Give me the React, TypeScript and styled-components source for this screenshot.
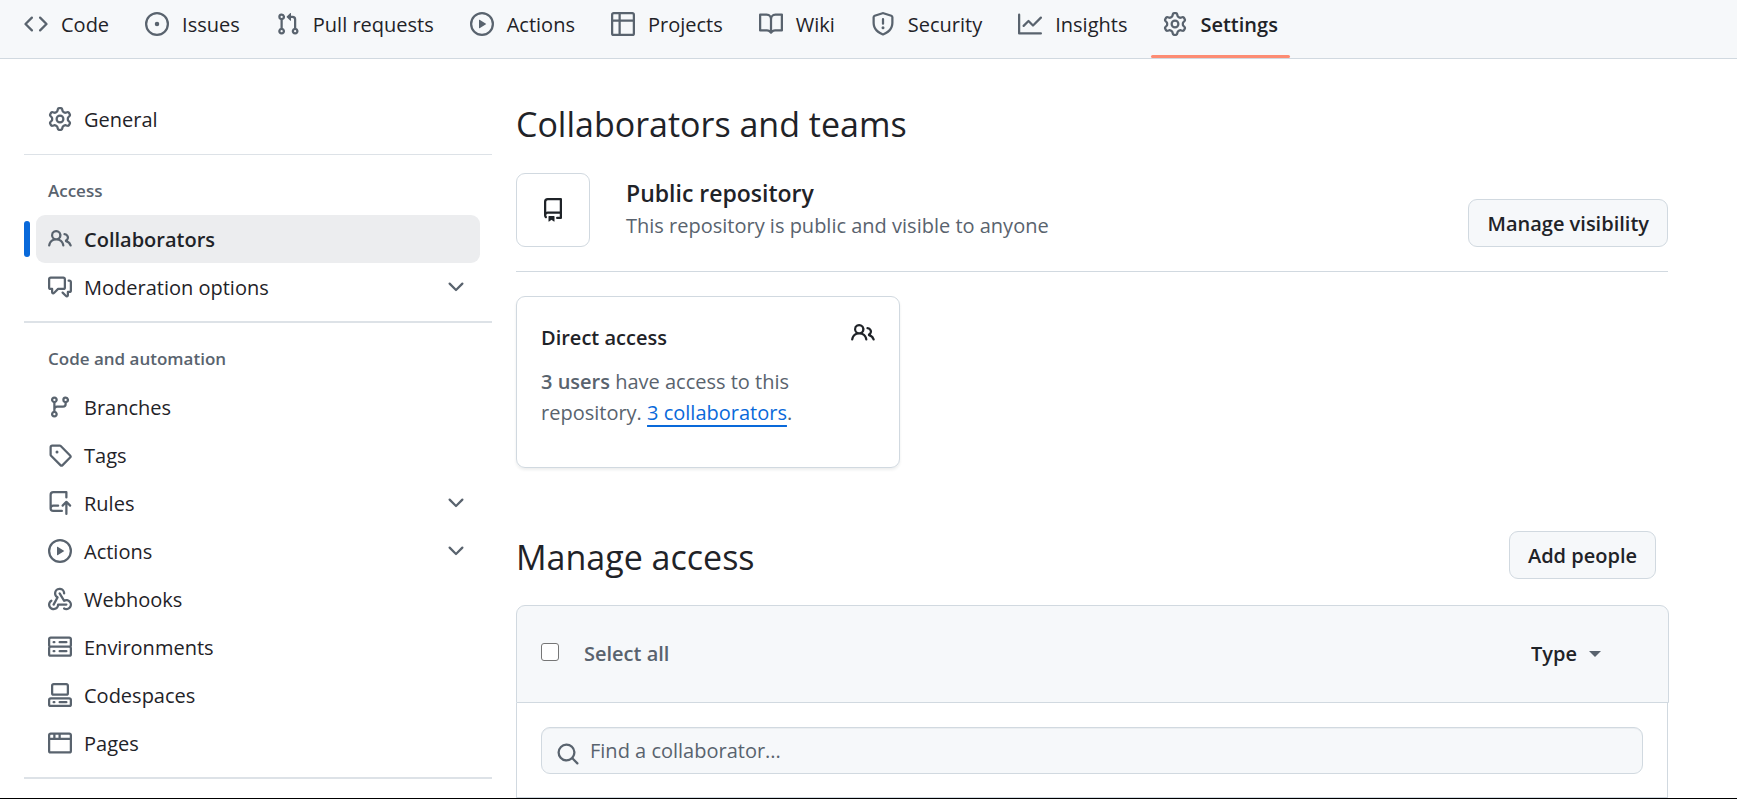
import React from "react";
import styled, { createGlobalStyle, css } from "styled-components";

const color = {
  text: "#1f2328",
  muted: "#59636e",
  border: "#d1d9e0",
  subtle: "#f6f8fa",
  link: "#0969da",
};

const icons = {
  code: ["m11.28 3.22 4.25 4.25a.75.75 0 0 1 0 1.06l-4.25 4.25a.749.749 0 0 1-1.275-.326.749.749 0 0 1 .215-.734L13.94 8l-3.72-3.72a.749.749 0 0 1 .326-1.275.749.749 0 0 1 .734.215Zm-6.56 0a.751.751 0 0 1 1.042.018.751.751 0 0 1 .018 1.042L2.06 8l3.72 3.72a.749.749 0 0 1-.326 1.275.749.749 0 0 1-.734-.215L.47 8.53a.75.75 0 0 1 0-1.06Z"],
  issue: ["M8 9.5a1.5 1.5 0 1 0 0-3 1.5 1.5 0 0 0 0 3Z", "M8 0a8 8 0 1 1 0 16A8 8 0 0 1 8 0ZM1.5 8a6.5 6.5 0 1 0 13 0 6.5 6.5 0 0 0-13 0Z"],
  pull: ["M1.5 3.25a2.25 2.25 0 1 1 3 2.122v5.256a2.251 2.251 0 1 1-1.5 0V5.372A2.25 2.25 0 0 1 1.5 3.25Zm5.677-.177L9.573.677A.25.25 0 0 1 10 .854V2.5h1A2.5 2.5 0 0 1 13.5 5v5.628a2.251 2.251 0 1 1-1.5 0V5a1 1 0 0 0-1-1h-1v1.646a.25.25 0 0 1-.427.177L7.177 3.427a.25.25 0 0 1 0-.354ZM3.75 2.5a.75.75 0 1 0 0 1.5.75.75 0 0 0 0-1.5Zm0 9.5a.75.75 0 1 0 0 1.5.75.75 0 0 0 0-1.5Zm8.25.75a.75.75 0 1 0 1.5 0 .75.75 0 0 0-1.5 0Z"],
  play: ["M8 0a8 8 0 1 1 0 16A8 8 0 0 1 8 0ZM1.5 8a6.5 6.5 0 1 0 13 0 6.5 6.5 0 0 0-13 0Zm4.879-2.773 4.264 2.559a.25.25 0 0 1 0 .428l-4.264 2.559A.25.25 0 0 1 6 10.559V5.442a.25.25 0 0 1 .379-.215Z"],
  table: ["M0 1.75C0 .784.784 0 1.75 0h12.5C15.216 0 16 .784 16 1.75v12.5A1.75 1.75 0 0 1 14.25 16H1.75A1.75 1.75 0 0 1 0 14.25ZM6.5 6.5v8h7.75a.25.25 0 0 0 .25-.25V6.5Zm8-1.5V1.75a.25.25 0 0 0-.25-.25H6.5V5Zm-13 1.5v7.75c0 .138.112.25.25.25H5v-8ZM5 5V1.5H1.75a.25.25 0 0 0-.25.25V5Z"],
  book: ["M0 1.75A.75.75 0 0 1 .75 1h4.253c1.227 0 2.317.59 3 1.501A3.743 3.743 0 0 1 11.006 1h4.245a.75.75 0 0 1 .75.75v10.5a.75.75 0 0 1-.75.75h-4.507a2.25 2.25 0 0 0-1.591.659l-.622.621a.75.75 0 0 1-1.06 0l-.622-.621A2.25 2.25 0 0 0 5.258 13H.75a.75.75 0 0 1-.75-.75Zm7.251 10.324.004-5.073-.002-2.253A2.25 2.25 0 0 0 5.003 2.5H1.5v9h3.757a3.75 3.75 0 0 1 1.994.574ZM8.755 4.75l-.004 7.322a3.752 3.752 0 0 1 1.992-.572H14.5v-9h-3.495a2.25 2.25 0 0 0-2.25 2.25Z"],
  shield: ["M7.467.133a1.748 1.748 0 0 1 1.066 0l5.25 1.68A1.75 1.75 0 0 1 15 3.48V7c0 1.566-.32 3.182-1.303 4.682-.983 1.498-2.585 2.813-5.032 3.855a1.697 1.697 0 0 1-1.33 0c-2.447-1.042-4.049-2.357-5.032-3.855C1.32 10.182 1 8.566 1 7V3.48a1.75 1.75 0 0 1 1.217-1.667Zm.61 1.429a.25.25 0 0 0-.153 0l-5.25 1.68a.25.25 0 0 0-.174.238V7c0 1.358.275 2.666 1.057 3.86.784 1.194 2.121 2.34 4.366 3.297a.196.196 0 0 0 .154 0c2.245-.956 3.582-2.104 4.366-3.298C13.225 9.666 13.5 8.36 13.5 7V3.48a.251.251 0 0 0-.174-.237l-5.25-1.68ZM8.75 4.75v3a.75.75 0 0 1-1.5 0v-3a.75.75 0 0 1 1.5 0ZM9 10.5a1 1 0 1 1-2 0 1 1 0 0 1 2 0Z"],
  graph: ["M1.5 1.75V13.5h13.75a.75.75 0 0 1 0 1.5H.75a.75.75 0 0 1-.75-.75V1.75a.75.75 0 0 1 1.5 0Zm14.28 2.53-5.25 5.25a.75.75 0 0 1-1.06 0L7 7.06 4.28 9.78a.751.751 0 0 1-1.042-.018.751.751 0 0 1-.018-1.042l3.25-3.25a.75.75 0 0 1 1.06 0L10 7.94l4.72-4.72a.751.751 0 0 1 1.042.018.751.751 0 0 1 .018 1.042Z"],
  gear: ["M8 0a8.2 8.2 0 0 1 .701.031C9.444.095 9.99.645 10.16 1.29l.288 1.107c.018.066.079.158.212.224.231.114.454.243.668.386.123.082.233.09.299.071l1.103-.303c.644-.176 1.392.021 1.82.63.27.385.506.792.704 1.218.315.675.111 1.422-.364 1.891l-.814.806c-.049.048-.098.147-.088.294.016.257.016.515 0 .772-.01.147.038.246.088.294l.814.806c.475.469.679 1.216.364 1.891a7.977 7.977 0 0 1-.704 1.217c-.428.61-1.176.807-1.82.63l-1.102-.302c-.067-.019-.177-.011-.3.071a5.909 5.909 0 0 1-.668.386c-.133.066-.194.158-.211.224l-.29 1.106c-.168.646-.715 1.196-1.458 1.26a8.006 8.006 0 0 1-1.402 0c-.743-.064-1.289-.614-1.458-1.26l-.289-1.106c-.018-.066-.079-.158-.212-.224a5.738 5.738 0 0 1-.668-.386c-.123-.082-.233-.09-.299-.071l-1.103.303c-.644.176-1.392-.021-1.82-.63a8.12 8.12 0 0 1-.704-1.218c-.315-.675-.111-1.422.363-1.891l.815-.806c.05-.048.098-.147.088-.294a6.214 6.214 0 0 1 0-.772c.01-.147-.038-.246-.088-.294l-.815-.806C.635 6.045.431 5.298.746 4.623a7.92 7.92 0 0 1 .704-1.217c.428-.61 1.176-.807 1.82-.63l1.102.302c.067.019.177.011.3-.071.214-.143.437-.272.668-.386.133-.066.194-.158.211-.224l.29-1.106C6.009.645 6.556.095 7.299.03 7.53.01 7.764 0 8 0Zm-.571 1.525c-.036.003-.108.036-.137.146l-.289 1.105c-.147.561-.549.967-.998 1.189-.173.086-.34.183-.5.29-.417.278-.97.423-1.529.27l-1.103-.303c-.109-.03-.175.016-.195.045-.22.312-.412.644-.573.99-.014.031-.021.11.059.19l.815.806c.411.406.562.957.53 1.456a4.709 4.709 0 0 0 0 .582c.032.499-.119 1.05-.53 1.456l-.815.806c-.081.08-.073.159-.059.19.162.346.353.677.573.989.02.03.085.076.195.046l1.102-.303c.56-.153 1.113-.008 1.53.27.161.107.328.204.501.29.447.222.85.629.997 1.189l.289 1.105c.029.109.101.143.137.146a6.6 6.6 0 0 0 1.142 0c.036-.003.108-.036.137-.146l.289-1.105c.147-.561.549-.967.998-1.189.173-.086.34-.183.5-.29.417-.278.97-.423 1.529-.27l1.103.303c.109.029.175-.016.195-.045.22-.313.411-.644.573-.99.014-.031.021-.11-.059-.19l-.815-.806c-.411-.406-.562-.957-.53-1.456a4.709 4.709 0 0 0 0-.582c-.032-.499.119-1.05.53-1.456l.815-.806c.081-.08.073-.159.059-.19a6.464 6.464 0 0 0-.573-.989c-.02-.03-.085-.076-.195-.046l-1.102.303c-.56.153-1.113.008-1.53-.27a4.44 4.44 0 0 0-.501-.29c-.447-.222-.85-.629-.997-1.189l-.289-1.105c-.029-.11-.101-.143-.137-.146a6.6 6.6 0 0 0-1.142 0ZM11 8a3 3 0 1 1-6 0 3 3 0 0 1 6 0ZM9.5 8a1.5 1.5 0 1 0-3.001.001A1.5 1.5 0 0 0 9.5 8Z"],
  people: ["M2 5.5a3.5 3.5 0 1 1 5.898 2.549 5.508 5.508 0 0 1 3.034 4.084.75.75 0 1 1-1.482.235 4 4 0 0 0-7.9 0 .75.75 0 0 1-1.482-.236A5.507 5.507 0 0 1 3.102 8.05 3.493 3.493 0 0 1 2 5.5ZM11 4a3.001 3.001 0 0 1 2.22 5.018 5.01 5.01 0 0 1 2.56 3.012.749.749 0 0 1-.885.954.752.752 0 0 1-.549-.514 3.507 3.507 0 0 0-2.522-2.372.75.75 0 0 1-.574-.73v-.352a.75.75 0 0 1 .416-.672A1.5 1.5 0 0 0 11 5.5.75.75 0 0 1 11 4Zm-5.5-.5a2 2 0 1 0-.001 3.999A2 2 0 0 0 5.5 3.5Z"],
  discussion: ["M1.75 1h8.5c.966 0 1.75.784 1.75 1.75v5.5A1.75 1.75 0 0 1 10.25 10H7.061l-2.574 2.573A1.458 1.458 0 0 1 2 11.543V10h-.25A1.75 1.75 0 0 1 0 8.25v-5.5C0 1.784.784 1 1.75 1ZM1.5 2.75v5.5c0 .138.112.25.25.25h1a.75.75 0 0 1 .75.75v2.19l2.72-2.72a.749.749 0 0 1 .53-.22h3.5a.25.25 0 0 0 .25-.25v-5.5a.25.25 0 0 0-.25-.25h-8.5a.25.25 0 0 0-.25.25Zm13 2a.25.25 0 0 0-.25-.25h-.5a.75.75 0 0 1 0-1.5h.5c.966 0 1.75.784 1.75 1.75v5.5A1.75 1.75 0 0 1 14.25 12H14v1.543a1.458 1.458 0 0 1-2.487 1.03L9.22 12.28a.749.749 0 0 1 .326-1.275.749.749 0 0 1 .734.215l2.22 2.22v-2.19a.75.75 0 0 1 .75-.75h1a.25.25 0 0 0 .25-.25Z"],
  branch: ["M9.5 3.25a2.25 2.25 0 1 1 3 2.122V6A2.5 2.5 0 0 1 10 8.5H6a1 1 0 0 0-1 1v1.128a2.251 2.251 0 1 1-1.5 0V5.372a2.25 2.25 0 1 1 1.5 0v1.836A2.493 2.493 0 0 1 6 7h4a1 1 0 0 0 1-1v-.628A2.25 2.25 0 0 1 9.5 3.25Zm-6 0a.75.75 0 1 0 1.5 0 .75.75 0 0 0-1.5 0Zm8.25-.75a.75.75 0 1 0 0 1.5.75.75 0 0 0 0-1.5ZM4.25 12a.75.75 0 1 0 0 1.5.75.75 0 0 0 0-1.5Z"],
  tag: ["M1 7.775V2.75C1 1.784 1.784 1 2.75 1h5.025c.464 0 .91.184 1.238.513l6.25 6.25a1.75 1.75 0 0 1 0 2.474l-5.026 5.026a1.75 1.75 0 0 1-2.474 0l-6.25-6.25A1.752 1.752 0 0 1 1 7.775Zm1.5 0c0 .066.026.13.073.177l6.25 6.25a.25.25 0 0 0 .354 0l5.025-5.025a.25.25 0 0 0 0-.354l-6.25-6.25a.25.25 0 0 0-.177-.073H2.75a.25.25 0 0 0-.25.25ZM6 5a1 1 0 1 1 0 2 1 1 0 0 1 0-2Z"],
  rules: ["M1 2.5A2.5 2.5 0 0 1 3.5 0h8.75a.75.75 0 0 1 .75.75v3.5a.75.75 0 0 1-1.5 0V1.5h-8a1 1 0 0 0-1 1v6.708A2.493 2.493 0 0 1 3.5 9h3.25a.75.75 0 0 1 0 1.5H3.5a1 1 0 0 0 0 2h5.75a.75.75 0 0 1 0 1.5H3.5A2.5 2.5 0 0 1 1 11.5Zm13.23 7.79-1.23-1.23v6.19a.75.75 0 0 1-1.5 0V9.06l-1.22 1.22a.75.75 0 0 1-1.06-1.06l2.5-2.5a.75.75 0 0 1 1.06 0l2.5 2.5a.75.75 0 0 1-1.05 1.07Z"],
  webhook: ["M5.5 4.25a2.25 2.25 0 0 1 4.5 0 .75.75 0 0 0 1.5 0 3.75 3.75 0 1 0-6.14 2.889l-2.272 4.258a.75.75 0 0 0 1.324.706L7 7.25a.75.75 0 0 0-.309-1.015A2.25 2.25 0 0 1 5.5 4.25Z", "M7.364 3.607a.75.75 0 0 1 1.03.257l2.608 4.349a3.75 3.75 0 1 1-.628 6.785.75.75 0 0 1 .752-1.299 2.25 2.25 0 1 0-.033-3.88.75.75 0 0 1-1.03-.256L7.107 4.636a.75.75 0 0 1 .257-1.03Z", "M2.9 8.776A.75.75 0 0 1 2.625 9.8 2.25 2.25 0 1 0 6 11.75a.75.75 0 0 1 .75-.751h5.5a.75.75 0 0 1 0 1.5H7.425a3.751 3.751 0 1 1-5.55-3.998.75.75 0 0 1 1.024.274Z"],
  server: ["M1.75 1h12.5c.966 0 1.75.784 1.75 1.75v4c0 .372-.116.717-.314 1 .198.283.314.628.314 1v4a1.75 1.75 0 0 1-1.75 1.75H1.75A1.75 1.75 0 0 1 0 12.75v-4c0-.358.109-.707.314-1a1.739 1.739 0 0 1-.314-1v-4C0 1.784.784 1 1.75 1ZM1.5 2.75v4c0 .138.112.25.25.25h12.5a.25.25 0 0 0 .25-.25v-4a.25.25 0 0 0-.25-.25H1.75a.25.25 0 0 0-.25.25Zm.25 5.75a.25.25 0 0 0-.25.25v4c0 .138.112.25.25.25h12.5a.25.25 0 0 0 .25-.25v-4a.25.25 0 0 0-.25-.25ZM7 4.75A.75.75 0 0 1 7.75 4h4.5a.75.75 0 0 1 0 1.5h-4.5A.75.75 0 0 1 7 4.75ZM7.75 10h4.5a.75.75 0 0 1 0 1.5h-4.5a.75.75 0 0 1 0-1.5ZM3 4.75A.75.75 0 0 1 3.75 4h.5a.75.75 0 0 1 0 1.5h-.5A.75.75 0 0 1 3 4.75ZM3.75 10h.5a.75.75 0 0 1 0 1.5h-.5a.75.75 0 0 1 0-1.5Z"],
  codespaces: ["M0 11.25c0-.966.784-1.75 1.75-1.75h12.5c.966 0 1.75.784 1.75 1.75v3A1.75 1.75 0 0 1 14.25 16H1.75A1.75 1.75 0 0 1 0 14.25Zm2-9.5C2 .784 2.784 0 3.75 0h8.5C13.216 0 14 .784 14 1.75v5a1.75 1.75 0 0 1-1.75 1.75h-8.5A1.75 1.75 0 0 1 2 6.75Zm1.75-.25a.25.25 0 0 0-.25.25v5c0 .138.112.25.25.25h8.5a.25.25 0 0 0 .25-.25v-5a.25.25 0 0 0-.25-.25Zm-2 9.5a.25.25 0 0 0-.25.25v3c0 .138.112.25.25.25h12.5a.25.25 0 0 0 .25-.25v-3a.25.25 0 0 0-.25-.25Z", "M7 12.75a.75.75 0 0 1 .75-.75h4.5a.75.75 0 0 1 0 1.5h-4.5a.75.75 0 0 1-.75-.75Zm-4 0a.75.75 0 0 1 .75-.75h.5a.75.75 0 0 1 0 1.5h-.5a.75.75 0 0 1-.75-.75Z"],
  browser: ["M0 2.75C0 1.784.784 1 1.75 1h12.5c.966 0 1.75.784 1.75 1.75v10.5A1.75 1.75 0 0 1 14.25 15H1.75A1.75 1.75 0 0 1 0 13.25ZM14.5 6h-13v7.25c0 .138.112.25.25.25h12.5a.25.25 0 0 0 .25-.25Zm-6-3.5v2h6V2.75a.25.25 0 0 0-.25-.25ZM5 2.5v2h2v-2Zm-3.25 0a.25.25 0 0 0-.25.25V4.5h2v-2Z"],
  chevron: ["M12.78 5.22a.749.749 0 0 1 0 1.06l-4.25 4.25a.749.749 0 0 1-1.06 0L3.22 6.28a.749.749 0 1 1 1.06-1.06L8 8.939l3.72-3.719a.749.749 0 0 1 1.06 0Z"],
  repo: ["M2 2.5A2.5 2.5 0 0 1 4.5 0h8.75a.75.75 0 0 1 .75.75v12.5a.75.75 0 0 1-.75.75h-2.5a.75.75 0 0 1 0-1.5h1.75v-2h-8a1 1 0 0 0-.714 1.7.75.75 0 1 1-1.072 1.05A2.495 2.495 0 0 1 2 11.5Zm10.5-1h-8a1 1 0 0 0-1 1v6.708A2.486 2.486 0 0 1 4.5 9h8ZM5 12.25a.25.25 0 0 1 .25-.25h3.5a.25.25 0 0 1 .25.25v3.25a.25.25 0 0 1-.4.2l-1.45-1.087a.249.249 0 0 0-.3 0L5.4 15.7a.25.25 0 0 1-.4-.2Z"],
  search: ["M10.68 11.74a6 6 0 0 1-7.922-8.982 6 6 0 0 1 8.982 7.922l3.04 3.04a.749.749 0 0 1-.326 1.275.749.749 0 0 1-.734-.215ZM11.5 7a4.499 4.499 0 1 0-8.997 0A4.499 4.499 0 0 0 11.5 7Z"],
};

type IconName = keyof typeof icons;

const Svg = styled.svg`
  flex: none;
  width: 24px;
  height: 24px;
  fill: currentColor;
`;

const Icon = ({ name }: { name: IconName }) => (
  <Svg viewBox="0 0 16 16" aria-hidden="true">
    {icons[name].map((d) => (
      <path key={d} d={d} />
    ))}
  </Svg>
);

const GlobalStyle = createGlobalStyle`
  *, *::before, *::after { box-sizing: border-box; }
  body {
    margin: 0;
    background: #fff;
    color: ${color.text};
    font: 400 20px/30px "Open Sans", "Noto Sans", sans-serif;
  }
  h1, h2, h3, p, ul { margin: 0; padding: 0; }
  ul { list-style: none; }
  button, input, select { font: inherit; color: inherit; }
`;

const Page = styled.div`
  display: flex;
  flex-direction: column;
  min-height: 100vh;
  border-bottom: 1px solid #000;
`;

const RepoNav = styled.nav`
  background: ${color.subtle};
  border-bottom: 1px solid ${color.border};
`;

const RepoTabs = styled.ul`
  display: flex;
  gap: 12px;
  padding: 0 12px;
`;

const RepoTab = styled.a<{ $current?: boolean }>`
  position: relative;
  display: flex;
  align-items: center;
  gap: 13px;
  height: 58px;
  padding: 0 12px 10px;
  color: ${color.text};
  font-weight: ${(p) => (p.$current ? 600 : 400)};
  text-decoration: none;
  white-space: nowrap;

  svg {
    color: ${color.muted};
  }

  ${(p) =>
    p.$current &&
    css`
      &::after {
        content: "";
        position: absolute;
        left: 0;
        right: 0;
        bottom: 0;
        height: 3px;
        border-radius: 9px;
        background: #fd8c73;
      }
    `}
`;

const Columns = styled.div`
  display: flex;
  flex: 1;
  gap: 24px;
  padding: 36px 69px 0 24px;
`;

const Sidebar = styled.nav`
  flex: none;
  width: 468px;
`;

const SidebarGroup = styled.section`
  padding-bottom: 10px;
  border-bottom: 2px solid #dde2e7;

  &:first-child {
    padding-bottom: 11px;
    border-bottom-width: 1px;
  }
`;

const GroupTitle = styled.h2`
  padding: 24px 24px 12px;
  color: ${color.muted};
  font-size: 17px;
  font-weight: 600;
  line-height: 24px;
`;

const rowStyle = css<{ $current?: boolean }>`
  position: relative;
  display: flex;
  align-items: center;
  gap: 12px;
  width: calc(100% - 24px);
  height: 48px;
  margin: 0 12px;
  padding: 0 12px;
  border: 0;
  border-radius: 9px;
  background: ${(p) => (p.$current ? "#ecedef" : "transparent")};
  color: ${color.text};
  font-weight: ${(p) => (p.$current ? 600 : 400)};
  text-align: left;
  text-decoration: none;

  svg {
    color: ${color.muted};
  }

  ${(p) =>
    p.$current &&
    css`
      &::before {
        content: "";
        position: absolute;
        left: -12px;
        top: 6px;
        width: 6px;
        height: 36px;
        border-radius: 9px;
        background: ${color.link};
      }
    `}
`;

const RowLink = styled.a`
  ${rowStyle}
`;

const RowButton = styled.button`
  ${rowStyle}
`;

const Label = styled.span`
  flex: 1;
  padding-top: 2px;
`;

const Content = styled.main`
  flex: 1;
  min-width: 0;
  padding-top: 3px;
`;

const Heading = styled.h2`
  font-size: 34px;
  font-weight: 400;
  line-height: 52px;
`;

const Visibility = styled.section`
  display: flex;
  align-items: flex-end;
  gap: 36px;
  margin-top: 23px;
  padding-bottom: 24px;
  border-bottom: 1px solid ${color.border};
`;

const RepoBadge = styled.div`
  display: grid;
  place-items: center;
  width: 74px;
  height: 74px;
  border: 1px solid ${color.border};
  border-radius: 9px;
`;

const VisibilityText = styled.div`
  flex: 1;
  align-self: flex-start;
  padding-top: 2px;
  color: ${color.muted};
`;

const VisibilityTitle = styled.h3`
  color: ${color.text};
  font-size: 23px;
  font-weight: 600;
  line-height: 36px;
`;

const Button = styled.button`
  height: 48px;
  padding: 1px 18px 0;
  border: 1px solid ${color.border};
  border-radius: 9px;
  background: ${color.subtle};
  font-weight: 600;
`;

const AccessCard = styled.section`
  display: flex;
  justify-content: space-between;
  width: 384px;
  margin-top: 24px;
  padding: 24px 24px 39px;
  border: 1px solid ${color.border};
  border-radius: 9px;
  box-shadow: 0 2px 3px rgba(31, 35, 40, 0.08);
`;

const CardText = styled.div`
  padding-top: 1px;
  color: ${color.muted};
  line-height: 31px;
  white-space: nowrap;
`;

const CardTitle = styled.h3`
  margin-bottom: 13px;
  color: ${color.text};
  font-size: 20px;
  font-weight: 600;
`;

const Strong = styled.strong`
  font-weight: 600;
`;

const TextLink = styled.a`
  color: ${color.link};
  text-decoration: underline 2px;
  text-underline-offset: 5px;
  text-decoration-skip-ink: none;
`;

const ManageHeader = styled.header`
  display: flex;
  align-items: flex-start;
  justify-content: space-between;
  margin-top: 63px;
  padding-right: 12px;
`;

const SelectBar = styled.div`
  display: flex;
  align-items: center;
  height: 98px;
  margin: 22px -1px 0 0;
  padding: 0 67px 0 24px;
  border: 1px solid ${color.border};
  border-radius: 9px 9px 0 0;
  background: ${color.subtle};
`;

const SelectAll = styled.label`
  display: flex;
  flex: 1;
  align-items: center;
  gap: 25px;
  color: ${color.muted};
  font-weight: 600;
`;

const Checkbox = styled.input`
  appearance: none;
  width: 18px;
  height: 18px;
  margin: 0 0 4px;
  border: 1px solid #767676;
  border-radius: 3px;
  background: #fff;
`;

const TypeFilter = styled.label`
  display: flex;
  align-items: center;
  gap: 12px;

  &::after {
    content: "";
    border: 6px solid transparent;
    border-top-color: ${color.muted};
    border-bottom-width: 0;
  }
`;

const TypeSelect = styled.select`
  appearance: none;
  padding: 0;
  border: 0;
  background: none;
  font-weight: 600;
`;

const List = styled.div`
  padding: 24px 24px 23px;
  border: 1px solid ${color.border};
  border-top: 0;
`;

const SearchField = styled.label`
  display: flex;
  align-items: center;
  gap: 10px;
  height: 47px;
  padding: 0 14px;
  border: 1px solid ${color.border};
  border-radius: 9px;
  background: ${color.subtle};
  box-shadow: inset 0 1px 0 rgba(208, 215, 222, 0.3);
  color: ${color.muted};

  svg {
    margin-top: 6px;
  }
`;

const SearchInput = styled.input`
  flex: 1;
  min-width: 0;
  padding: 0;
  border: 0;
  outline: 0;
  background: none;

  &::placeholder {
    color: ${color.muted};
    opacity: 1;
  }
`;

const tabs: { icon: IconName; label: string; current?: boolean }[] = [
  { icon: "code", label: "Code" },
  { icon: "issue", label: "Issues" },
  { icon: "pull", label: "Pull requests" },
  { icon: "play", label: "Actions" },
  { icon: "table", label: "Projects" },
  { icon: "book", label: "Wiki" },
  { icon: "shield", label: "Security" },
  { icon: "graph", label: "Insights" },
  { icon: "gear", label: "Settings", current: true },
];

type Item = { icon: IconName; label: string; current?: boolean; expands?: boolean };

const groups: { title?: string; items: Item[] }[] = [
  { items: [{ icon: "gear", label: "General" }] },
  {
    title: "Access",
    items: [
      { icon: "people", label: "Collaborators", current: true },
      { icon: "discussion", label: "Moderation options", expands: true },
    ],
  },
  {
    title: "Code and automation",
    items: [
      { icon: "branch", label: "Branches" },
      { icon: "tag", label: "Tags" },
      { icon: "rules", label: "Rules", expands: true },
      { icon: "play", label: "Actions", expands: true },
      { icon: "webhook", label: "Webhooks" },
      { icon: "server", label: "Environments" },
      { icon: "codespaces", label: "Codespaces" },
      { icon: "browser", label: "Pages" },
    ],
  },
];

const SidebarItem = ({ icon, label, current, expands }: Item) =>
  expands ? (
    <RowButton type="button" aria-expanded={false}>
      <Icon name={icon} />
      <Label>{label}</Label>
      <Icon name="chevron" />
    </RowButton>
  ) : (
    <RowLink href="#" $current={current} aria-current={current ? "page" : undefined}>
      <Icon name={icon} />
      <Label>{label}</Label>
    </RowLink>
  );

export default function App() {
  return (
    <Page>
      <GlobalStyle />
      <RepoNav>
        <RepoTabs>
          {tabs.map((t) => (
            <li key={t.label}>
              <RepoTab href="#" $current={t.current} aria-current={t.current ? "page" : undefined}>
                <Icon name={t.icon} />
                <Label>{t.label}</Label>
              </RepoTab>
            </li>
          ))}
        </RepoTabs>
      </RepoNav>

      <Columns>
        <Sidebar>
          {groups.map((g, i) => (
            <SidebarGroup key={i}>
              {g.title && <GroupTitle>{g.title}</GroupTitle>}
              <ul>
                {g.items.map((item) => (
                  <li key={item.label}>
                    <SidebarItem {...item} />
                  </li>
                ))}
              </ul>
            </SidebarGroup>
          ))}
        </Sidebar>

        <Content>
          <Heading as="h1">Collaborators and teams</Heading>
          <Visibility>
            <RepoBadge>
              <Icon name="repo" />
            </RepoBadge>
            <VisibilityText>
              <VisibilityTitle>Public repository</VisibilityTitle>
              <p>This repository is public and visible to anyone</p>
            </VisibilityText>
            <Button type="button">Manage visibility</Button>
          </Visibility>

          <AccessCard>
            <CardText>
              <CardTitle>Direct access</CardTitle>
              <p>
                <Strong>3 users</Strong> have access to this
                <br />
                repository. <TextLink href="#">3 collaborators</TextLink>.
              </p>
            </CardText>
            <Icon name="people" />
          </AccessCard>

          <ManageHeader>
            <Heading>Manage access</Heading>
            <Button type="button">Add people</Button>
          </ManageHeader>

          <SelectBar>
            <SelectAll>
              <Checkbox type="checkbox" />
              Select all
            </SelectAll>
            <TypeFilter>
              <TypeSelect aria-label="Type">
                <option>Type</option>
              </TypeSelect>
            </TypeFilter>
          </SelectBar>
          <List>
            <SearchField>
              <Icon name="search" />
              <SearchInput type="text" aria-label="Find a collaborator" placeholder="Find a collaborator..." />
            </SearchField>
          </List>
        </Content>
      </Columns>
    </Page>
  );
}
